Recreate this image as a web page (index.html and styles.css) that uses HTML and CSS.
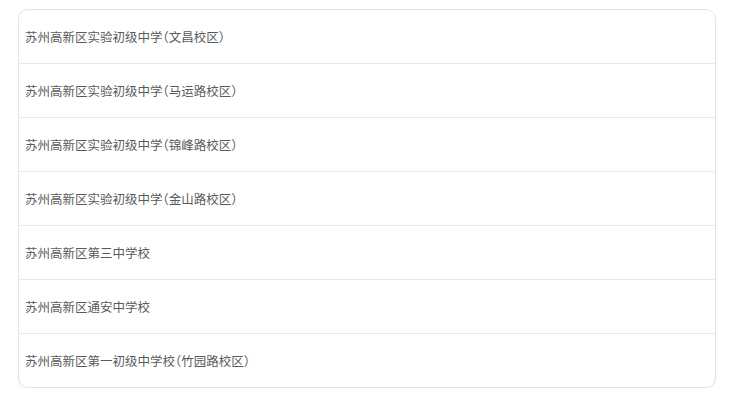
FILE: index.html
```html
<!DOCTYPE html>
<html lang="zh">
<head>
<meta charset="utf-8">
<link rel="stylesheet" href="styles.css">
</head>
<body>
<ul class="list">
  <li class="item">苏州高新区实验初级中学（文昌校区）</li>
  <li class="item">苏州高新区实验初级中学（马运路校区）</li>
  <li class="item">苏州高新区实验初级中学（锦峰路校区）</li>
  <li class="item">苏州高新区实验初级中学（金山路校区）</li>
  <li class="item">苏州高新区第三中学校</li>
  <li class="item">苏州高新区通安中学校</li>
  <li class="item">苏州高新区第一初级中学校（竹园路校区）</li>
</ul>
</body>
</html>
```
FILE: styles.css
```css
html, body {
  margin: 0;
  padding: 0;
  background: #ffffff;
}
body {
  padding: 9px 0 0 18px;
  font-family: "Noto Sans CJK SC", "Noto Sans", sans-serif;
}
.list {
  list-style: none;
  margin: 0;
  padding: 0;
  width: 696px;
  border: 1px solid #e3e3e3;
  border-radius: 10px;
  box-shadow: 0 1px 2px rgba(0,0,0,0.05);
  overflow: hidden;
}
.item {
  height: 53px;
  display: flex;
  align-items: center;
  padding-left: 6px;
  font-size: 12.5px;
  font-feature-settings: "halt";
  color: #5a5a5a;
  border-top: 1px solid #e8e8e8;
}
.item:first-child {
  border-top: none;
}
```
